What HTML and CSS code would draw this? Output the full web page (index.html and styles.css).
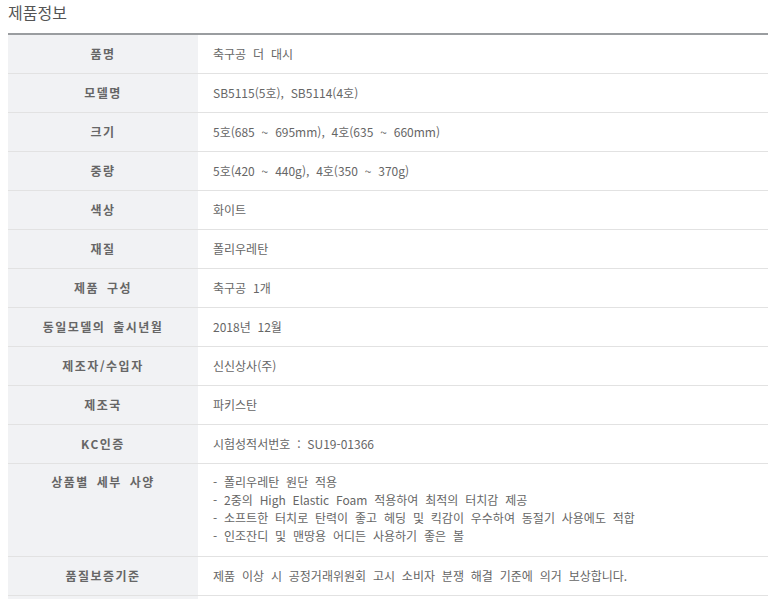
FILE: index.html
```html
<!DOCTYPE html>
<html lang="ko">
<head>
  <meta charset="UTF-8">
  <meta name="viewport" content="width=device-width, initial-scale=1.0">
  <title>제품정보</title>
  <link rel="stylesheet" href="styles.css">
</head>
<body>
  <h2 class="title">제품정보</h2>

  <table class="info">
    <tr><th>품명</th><td>축구공 더 대시</td></tr>
    <tr><th>모델명</th><td>SB5115(5호), SB5114(4호)</td></tr>
    <tr><th>크기</th><td>5호(685 ~ 695mm), 4호(635 ~ 660mm)</td></tr>
    <tr><th>중량</th><td>5호(420 ~ 440g), 4호(350 ~ 370g)</td></tr>
    <tr><th>색상</th><td>화이트</td></tr>
    <tr><th>재질</th><td>폴리우레탄</td></tr>
    <tr><th>제품 구성</th><td>축구공 1개</td></tr>
    <tr><th>동일모델의 출시년월</th><td>2018년 12월</td></tr>
    <tr><th>제조자/수입자</th><td>신신상사(주)</td></tr>
    <tr><th>제조국</th><td>파키스탄</td></tr>
    <tr><th>KC인증</th><td>시험성적서번호 : SU19-01366</td></tr>
    <tr class="multi">
      <th>상품별 세부 사양</th>
      <td>
        - 폴리우레탄 원단 적용<br>
        - 2중의 High Elastic Foam 적용하여 최적의 터치감 제공<br>
        - 소프트한 터치로 탄력이 좋고 헤딩 및 킥감이 우수하여 동절기 사용에도 적합<br>
        - 인조잔디 및 맨땅용 어디든 사용하기 좋은 볼
      </td>
    </tr>
    <tr><th>품질보증기준</th><td>제품 이상 시 공정거래위원회 고시 소비자 분쟁 해결 기준에 의거 보상합니다.</td></tr>
    <tr><th></th><td></td></tr>
  </table>
</body>
</html>
```

FILE: styles.css
```css
body {margin: 0 8px; background: #fff; font-family: "Noto Sans CJK KR", "Noto Sans", sans-serif; color: #666;}
.title {margin: 0 0 9px; font-size: 16px; line-height: 24px; font-weight: normal; color: #555;}
.info {width: 760px; border-collapse: collapse; border-top: 2px solid #9a9da0; font-size: 12px;}
.info th, .info td {height: 38px; padding: 0; border-bottom: 1px solid #e2e2e2; line-height: 18px;}
.info th {width: 190px; background: #f1f2f4; color: #666; font-weight: bold; text-align: center; letter-spacing: 1.5px; word-spacing: 3px;}
.info td {padding-left: 15px; color: #666; text-align: left; word-spacing: 3.5px;}
.info .multi th, .info .multi td {vertical-align: top; padding-top: 9px; padding-bottom: 11px;}
.info .multi th {padding-left: 0;}
```
